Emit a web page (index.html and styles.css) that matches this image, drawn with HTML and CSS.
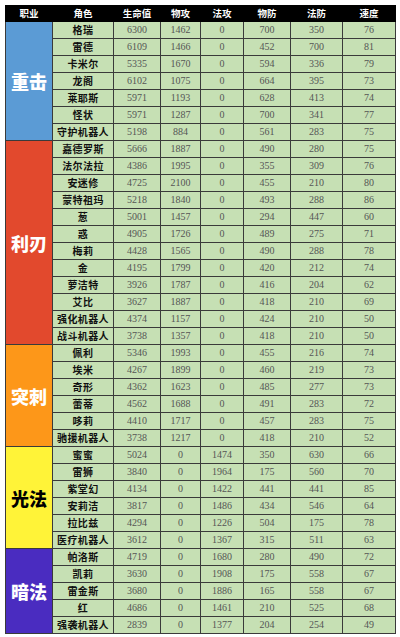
FILE: index.html
```html
<!DOCTYPE html>
<html lang="zh">
<head>
<meta charset="utf-8">
<link rel="stylesheet" href="styles.css">
</head>
<body>
<table class="stats">
<colgroup>
<col class="c-job"><col class="c-name"><col class="c-hp"><col class="c-pa"><col class="c-ma"><col class="c-pd"><col class="c-md"><col class="c-sp">
</colgroup>
<thead>
<tr><th>职业</th><th>角色</th><th>生命值</th><th>物攻</th><th>法攻</th><th>物防</th><th>法防</th><th>速度</th></tr>
</thead>
<tbody>
<tr><td class="grp g-blue" rowspan="7">重击</td><td class="nm">格瑞</td><td>6300</td><td>1462</td><td>0</td><td>700</td><td>350</td><td>76</td></tr>
<tr><td class="nm">雷德</td><td>6109</td><td>1466</td><td>0</td><td>452</td><td>700</td><td>81</td></tr>
<tr><td class="nm">卡米尔</td><td>5335</td><td>1670</td><td>0</td><td>594</td><td>336</td><td>79</td></tr>
<tr><td class="nm">龙阁</td><td>6102</td><td>1075</td><td>0</td><td>664</td><td>395</td><td>73</td></tr>
<tr><td class="nm">莱耶斯</td><td>5971</td><td>1193</td><td>0</td><td>628</td><td>413</td><td>74</td></tr>
<tr><td class="nm">怪状</td><td>5971</td><td>1287</td><td>0</td><td>700</td><td>341</td><td>77</td></tr>
<tr><td class="nm">守护机器人</td><td>5198</td><td>884</td><td>0</td><td>561</td><td>283</td><td>75</td></tr>

<tr><td class="grp g-red" rowspan="12">利刃</td><td class="nm">嘉德罗斯</td><td>5666</td><td>1887</td><td>0</td><td>490</td><td>280</td><td>75</td></tr>
<tr><td class="nm">法尔法拉</td><td>4386</td><td>1995</td><td>0</td><td>355</td><td>309</td><td>76</td></tr>
<tr><td class="nm">安迷修</td><td>4725</td><td>2100</td><td>0</td><td>455</td><td>210</td><td>80</td></tr>
<tr><td class="nm">蒙特祖玛</td><td>5218</td><td>1840</td><td>0</td><td>493</td><td>288</td><td>86</td></tr>
<tr><td class="nm">葱</td><td>5001</td><td>1457</td><td>0</td><td>294</td><td>447</td><td>60</td></tr>
<tr><td class="nm">惑</td><td>4905</td><td>1726</td><td>0</td><td>489</td><td>275</td><td>71</td></tr>
<tr><td class="nm">梅莉</td><td>4428</td><td>1565</td><td>0</td><td>490</td><td>288</td><td>78</td></tr>
<tr><td class="nm">金</td><td>4195</td><td>1799</td><td>0</td><td>420</td><td>212</td><td>74</td></tr>
<tr><td class="nm">萝洁特</td><td>3926</td><td>1787</td><td>0</td><td>416</td><td>204</td><td>62</td></tr>
<tr><td class="nm">艾比</td><td>3627</td><td>1887</td><td>0</td><td>418</td><td>210</td><td>69</td></tr>
<tr><td class="nm">强化机器人</td><td>4374</td><td>1157</td><td>0</td><td>424</td><td>210</td><td>50</td></tr>
<tr><td class="nm">战斗机器人</td><td>3738</td><td>1357</td><td>0</td><td>418</td><td>210</td><td>50</td></tr>

<tr><td class="grp g-orange" rowspan="6">突刺</td><td class="nm">佩利</td><td>5346</td><td>1993</td><td>0</td><td>455</td><td>216</td><td>74</td></tr>
<tr><td class="nm">埃米</td><td>4267</td><td>1899</td><td>0</td><td>460</td><td>219</td><td>73</td></tr>
<tr><td class="nm">奇形</td><td>4362</td><td>1623</td><td>0</td><td>485</td><td>277</td><td>73</td></tr>
<tr><td class="nm">蕾蒂</td><td>4562</td><td>1688</td><td>0</td><td>491</td><td>283</td><td>72</td></tr>
<tr><td class="nm">哆莉</td><td>4410</td><td>1717</td><td>0</td><td>457</td><td>283</td><td>75</td></tr>
<tr><td class="nm">驰援机器人</td><td>3738</td><td>1217</td><td>0</td><td>418</td><td>210</td><td>52</td></tr>

<tr><td class="grp g-yellow" rowspan="6">光法</td><td class="nm">蜜蜜</td><td>5024</td><td>0</td><td>1474</td><td>350</td><td>630</td><td>66</td></tr>
<tr><td class="nm">雷狮</td><td>3840</td><td>0</td><td>1964</td><td>175</td><td>560</td><td>70</td></tr>
<tr><td class="nm">紫堂幻</td><td>4134</td><td>0</td><td>1422</td><td>441</td><td>441</td><td>85</td></tr>
<tr><td class="nm">安莉洁</td><td>3817</td><td>0</td><td>1486</td><td>434</td><td>546</td><td>64</td></tr>
<tr><td class="nm">拉比兹</td><td>4294</td><td>0</td><td>1226</td><td>504</td><td>175</td><td>78</td></tr>
<tr><td class="nm">医疗机器人</td><td>3612</td><td>0</td><td>1367</td><td>315</td><td>511</td><td>63</td></tr>

<tr><td class="grp g-purple" rowspan="5">暗法</td><td class="nm">帕洛斯</td><td>4719</td><td>0</td><td>1680</td><td>280</td><td>490</td><td>72</td></tr>
<tr><td class="nm">凯莉</td><td>3630</td><td>0</td><td>1908</td><td>175</td><td>558</td><td>67</td></tr>
<tr><td class="nm">雷金斯</td><td>3680</td><td>0</td><td>1886</td><td>165</td><td>558</td><td>67</td></tr>
<tr><td class="nm">红</td><td>4686</td><td>0</td><td>1461</td><td>210</td><td>525</td><td>68</td></tr>
<tr><td class="nm">强袭机器人</td><td>2839</td><td>0</td><td>1377</td><td>204</td><td>254</td><td>49</td></tr>
</tbody>
</table>
</body>
</html>
```

FILE: styles.css
```css
html, body {
  margin: 0;
  padding: 0;
  background: #ffffff;
}
body {
  padding: 5px;
}
.stats {
  border-collapse: collapse;
  table-layout: fixed;
  width: 390px;
  font-family: "Liberation Serif", "Noto Sans CJK SC", serif;
}
.c-job { width: 47px; }
.c-name { width: 61px; }
.c-hp { width: 47px; }
.c-pa { width: 40px; }
.c-ma { width: 43px; }
.c-pd { width: 47px; }
.c-md { width: 52px; }
.c-sp { width: 53px; }

.stats th {
  background: #000000;
  color: #ffffff;
  height: 15px;
  padding: 0;
  font-family: "Noto Sans CJK SC", sans-serif;
  font-weight: 700;
  font-size: 9.5px;
  line-height: 15px;
  text-align: center;
  border: 1px solid #000000;
}
.stats td {
  background: #c6e0b4;
  height: 16px;
  padding: 0;
  border: 1px solid #3a3a3a;
  text-align: center;
  font-size: 10px;
  line-height: 16px;
  color: #555555;
  white-space: nowrap;
  overflow: hidden;
}
.stats td.nm {
  font-family: "Noto Sans CJK SC", sans-serif;
  font-weight: 700;
  font-size: 10px;
  letter-spacing: 0.4px;
  color: #111111;
}
.stats td.grp {
  font-family: "Noto Sans CJK SC", sans-serif;
  font-weight: 900;
  font-size: 18px;
  line-height: 20px;
  color: #ffffff;
  vertical-align: middle;
}
.g-blue { background: #5b9bd5 !important; }
.g-red { background: #e2492d !important; }
.g-orange { background: #fd9719 !important; }
.g-yellow { background: #fff338 !important; color: #000000 !important; }
.g-purple { background: #4a2cc0 !important; }
```
